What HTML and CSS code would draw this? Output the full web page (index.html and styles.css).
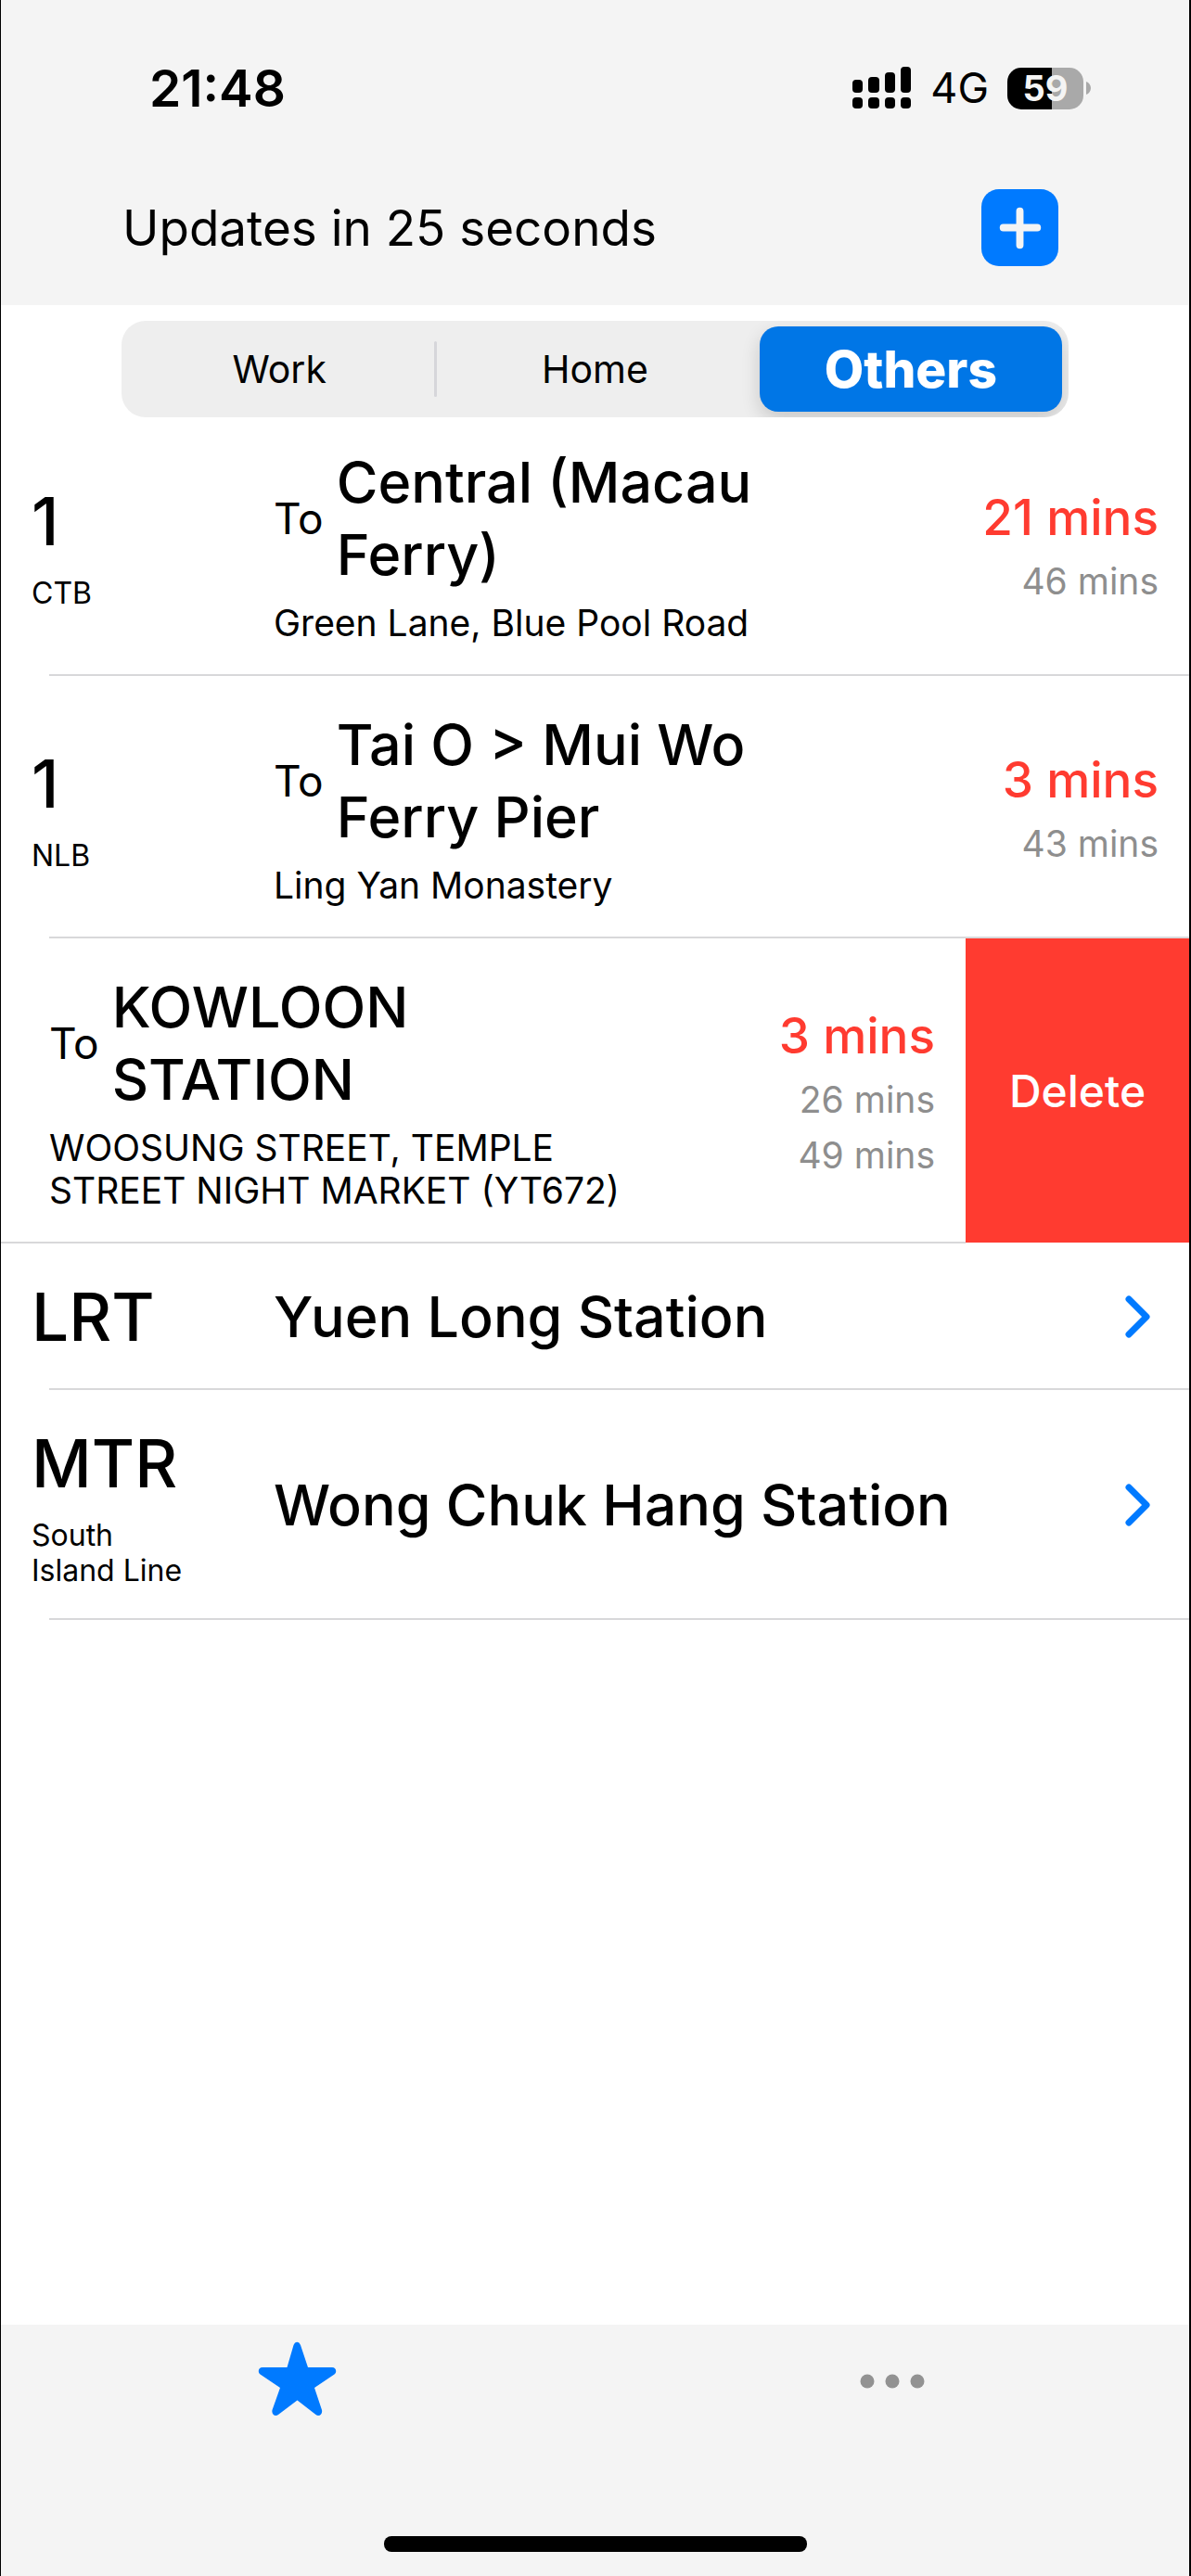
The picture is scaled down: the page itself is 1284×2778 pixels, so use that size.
FILE: index.html
```html
<!DOCTYPE html>
<html lang="en">
<head>
<meta charset="utf-8">
<meta name="viewport" content="width=device-width, initial-scale=1">
<title>Favourites</title>
<link rel="stylesheet" href="styles.css">
</head>
<body>
<div class="app">
  <header class="top">
    <div class="status">
      <span class="status-time">21:48</span>
      <div class="status-right">
        <svg class="signal" viewBox="0 0 64 46" aria-hidden="true">
          <rect x="0" y="14" width="11" height="14" rx="4"/>
          <rect x="17" y="11" width="12" height="17" rx="4"/>
          <rect x="35" y="6" width="11" height="22" rx="4"/>
          <rect x="52" y="0" width="11" height="28" rx="4"/>
          <rect x="0" y="33" width="11" height="12" rx="4"/>
          <rect x="17" y="33" width="12" height="12" rx="4"/>
          <rect x="35" y="33" width="11" height="12" rx="4"/>
          <rect x="52" y="33" width="11" height="12" rx="4"/>
        </svg>
        <span class="network">4G</span>
        <span class="battery">
          <span class="battery-body">59</span>
          <svg class="battery-tip" viewBox="0 0 5 14" aria-hidden="true"><path d="M0 0C3 1 5 4 5 7S3 13 0 14Z"/></svg>
        </span>
      </div>
    </div>
    <div class="title-bar">
      <h1 class="updates">Updates in 25 seconds</h1>
      <button class="add" type="button" aria-label="Add">
        <svg viewBox="0 0 84 84" aria-hidden="true"><path d="M42 24V61M24 42H61"/></svg>
      </button>
    </div>
  </header>

  <main>
    <div class="segments" role="radiogroup" aria-label="Group">
      <label class="segment"><input type="radio" name="group">Work</label>
      <label class="segment"><input type="radio" name="group">Home</label>
      <label class="segment"><input type="radio" name="group" checked>Others</label>
    </div>

    <ul class="routes">
      <li class="row">
        <div class="code"><span class="code-name">1</span><span class="code-sub">CTB</span></div>
        <div class="stop">
          <div class="dest"><span class="to">To</span><span class="name">Central (Macau Ferry)</span></div>
          <p class="at">Green Lane, Blue Pool Road</p>
        </div>
        <div class="times"><span class="next">21 mins</span><span class="later">46 mins</span></div>
      </li>
      <li class="row">
        <div class="code"><span class="code-name">1</span><span class="code-sub">NLB</span></div>
        <div class="stop">
          <div class="dest"><span class="to">To</span><span class="name">Tai O &gt; Mui Wo Ferry Pier</span></div>
          <p class="at">Ling Yan Monastery</p>
        </div>
        <div class="times"><span class="next">3 mins</span><span class="later">43 mins</span></div>
      </li>
      <li class="row row-swiped">
        <div class="stop">
          <div class="dest"><span class="to">To</span><span class="name">KOWLOON STATION</span></div>
          <p class="at">WOOSUNG STREET, TEMPLE STREET NIGHT MARKET (YT672)</p>
        </div>
        <div class="times"><span class="next">3 mins</span><span class="later">26 mins</span><span class="later">49 mins</span></div>
        <button class="delete" type="button">Delete</button>
      </li>
      <li>
        <a class="row row-link" href="#lrt">
          <span class="code"><span class="code-name">LRT</span></span>
          <span class="name station">Yuen Long Station</span>
          <svg class="chevron" viewBox="0 0 28 46" aria-hidden="true"><path d="M4 4L23 23L4 42"/></svg>
        </a>
      </li>
      <li>
        <a class="row row-link" href="#mtr">
          <span class="code"><span class="code-name">MTR</span><span class="code-sub">South<br>Island Line</span></span>
          <span class="name station">Wong Chuk Hang Station</span>
          <svg class="chevron" viewBox="0 0 28 46" aria-hidden="true"><path d="M4 4L23 23L4 42"/></svg>
        </a>
      </li>
    </ul>
  </main>

  <nav class="tabs">
    <div class="tab-links">
      <a class="tab tab-active" href="#favourites" aria-label="Favourites">
        <svg viewBox="0 0 84 84" aria-hidden="true"><path d="M37.500 5C39 .5 43.500 .5 45 5L53 29H79C83.500 29 84.500 34 81.500 36.500L60 51L68 75C69 79.500 65 82.500 61.500 80L41.500 64.500L21 80C17.500 82.500 13.500 79.500 14.500 75L23 51L1.500 36.500C-1.500 34 -.5 29 4 29H30.500Z"/></svg>
      </a>
      <a class="tab" href="#more" aria-label="More">
        <svg viewBox="0 0 84 84" aria-hidden="true"><circle cx="15" cy="44" r="7.500"/><circle cx="42" cy="44" r="7.500"/><circle cx="69" cy="44" r="7.500"/></svg>
      </a>
    </div>
    <div class="home-indicator"></div>
  </nav>
</div>
</body>
</html>
```
FILE: styles.css
```css
:root {
  --blue: #007aff;
  --red: #ff3b30;
  --grey: #8e8e8e;
  --bar: #f4f4f4;
  --line: #d8d8da;
}

* { box-sizing: border-box; }

body {
  margin: 0;
  background: #fff;
  color: #000;
  font-family: Inter, "Liberation Sans", sans-serif;
}

button { border: 0; padding: 0; font: inherit; cursor: pointer; }
a { color: inherit; text-decoration: none; }

.app {
  display: flex;
  flex-direction: column;
  min-height: 100vh;
  border-left: 1px solid #000;
  border-right: 2px solid #000;
}

main { flex: 1; }

/* Status and title bars */
.top { background: var(--bar); padding: 64px 0 42px; }

.status {
  display: flex;
  justify-content: space-between;
  align-items: center;
  height: 62px;
  padding: 0 106px 0 160px;
}
.status-time { font-size: 55px; font-weight: 600; line-height: 62px; }
.status-right { display: flex; align-items: center; }
.signal { width: 64px; height: 46px; margin-right: 20px; }
.network { font-size: 45px; line-height: 62px; margin-right: 20px; }
.battery { display: flex; align-items: center; gap: 3px; }
.battery-body {
  width: 82px;
  border-radius: 15px;
  background: linear-gradient(to right, #000 48px, #a9a9a9 48px);
  color: #f4f4f4;
  font-size: 38px;
  font-weight: 700;
  line-height: 45px;
  text-align: center;
}
.battery-tip { width: 5px; height: 14px; fill: #a9a9a9; }

.title-bar {
  display: flex;
  justify-content: space-between;
  align-items: center;
  margin-top: 78px;
  padding: 0 141px 0 131px;
}
.updates { margin: 0; font-size: 53px; font-weight: 400; line-height: 66px; }
.add { width: 83px; height: 83px; border-radius: 19px; background: var(--blue); }
.add svg { display: block; fill: none; stroke: var(--bar); stroke-width: 8; stroke-linecap: round; }

/* Group picker */
.segments {
  display: grid;
  grid-template-columns: repeat(3, 1fr);
  margin: 17px 130px 0;
  border-radius: 26px;
  background: #eee;
  overflow: hidden;
}
.segment {
  position: relative;
  margin: 6px 0;
  font-size: 41px;
  line-height: 92px;
  text-align: center;
  border-radius: 20px;
}
.segment input { position: absolute; opacity: 0; }
.segment:first-child::after {
  content: "";
  position: absolute;
  top: 16px;
  right: 0;
  width: 3px;
  height: 60px;
  border-radius: 2px;
  background: #d6d6da;
}
.segment:has(:checked) {
  margin: 6px 7px;
  background: #0076e6;
  color: #fff;
  font-size: 55px;
  font-weight: 800;
  box-shadow: 0 8px 20px rgba(0, 0, 0, .16);
}

/* Favourite routes */
.routes { list-style: none; margin: -4px 0 0; padding: 0; }
.row {
  position: relative;
  display: flex;
  align-items: center;
  padding: 35px 33px 34px;
}
.row::after {
  content: "";
  position: absolute;
  left: 52px;
  right: 0;
  bottom: 0;
  height: 2px;
  background: var(--line);
}
.code { display: flex; flex-direction: column; gap: 14px; flex: 0 0 261px; }
.code-name { font-size: 71px; font-weight: 500; line-height: 90px; }
.code-sub { font-size: 32px; line-height: 38px; }
.stop { flex: 0 0 620px; }
.dest { display: flex; align-items: center; gap: 14px; }
.to { font-size: 46px; line-height: 78px; }
.name { font-size: 61px; font-weight: 500; line-height: 78px; }
.station { flex: 1; }
.at { margin: 12px 0 0; font-size: 39px; line-height: 46px; }
.times {
  display: flex;
  flex-direction: column;
  gap: 14px;
  margin-left: auto;
  text-align: right;
}
.next { color: var(--red); font-size: 53px; font-weight: 500; line-height: 64px; }
.later { color: var(--grey); font-size: 39px; line-height: 46px; }
.row-link { padding: 34px 33px; }
.row-swiped { padding-left: 52px; padding-right: 274px; }
.row-swiped::after { left: 0; right: 241px; }
.delete {
  position: absolute;
  inset: 0 0 1px auto;
  width: 241px;
  background: var(--red);
  color: #fff;
  font-size: 48px;
  font-weight: 500;
}
.chevron { width: 28px; height: 46px; margin-right: 8px; fill: none; stroke: var(--blue); stroke-width: 7; stroke-linecap: round; stroke-linejoin: round; }

/* Tab bar */
.tabs { background: var(--bar); padding: 17px 0 26px; }
.tab-links { display: flex; }
.tab { flex: 1; display: flex; justify-content: center; color: #929292; }
.tab svg { width: 84px; height: 84px; fill: currentColor; overflow: visible; }
.tab-active { color: var(--blue); }
.home-indicator { width: 456px; height: 17px; margin: 127px auto 0; border-radius: 8px; background: #000; }
```
